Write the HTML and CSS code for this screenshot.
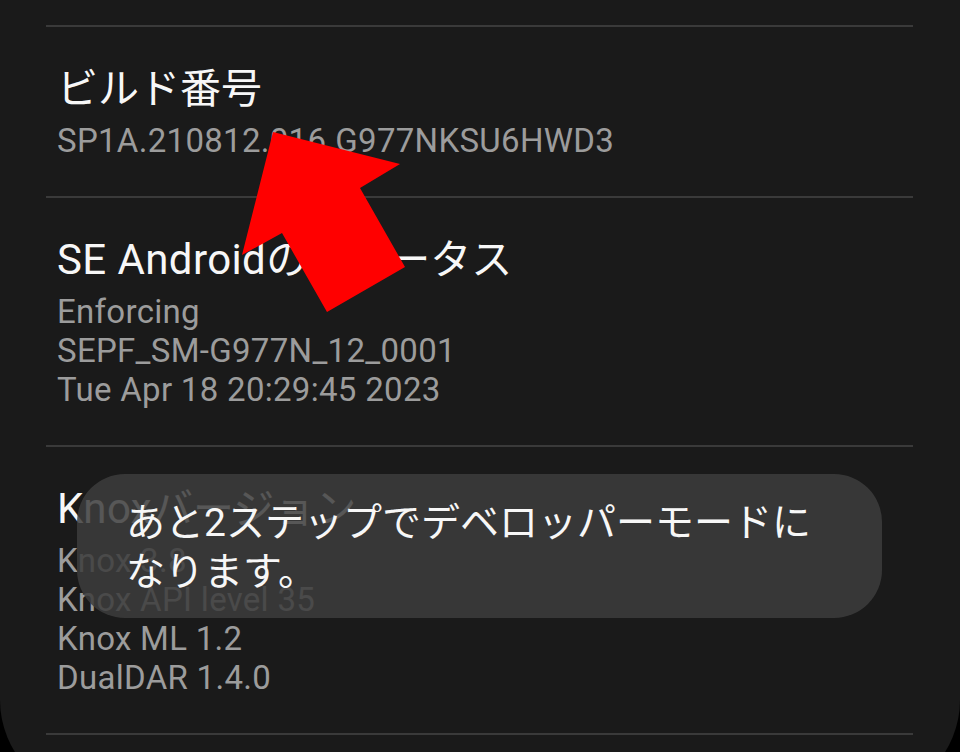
FILE: index.html
```html
<!DOCTYPE html>
<html lang="ja">
<head>
<meta charset="utf-8">
<title>ソフトウェア情報</title>
<link rel="stylesheet" href="styles.css">
</head>
<body>
<div class="screen">
  <div class="card">
    <div class="divider"></div>
    <div class="row">
      <div class="title">ビルド番号</div>
      <div class="sub">SP1A.210812.016.G977NKSU6HWD3</div>
    </div>
    <div class="divider"></div>
    <div class="row">
      <div class="title"><span class="latin">SE Android</span>のステータス</div>
      <div class="sub">Enforcing</div>
      <div class="sub">SEPF_SM-G977N_12_0001</div>
      <div class="sub">Tue Apr 18 20:29:45 2023</div>
    </div>
    <div class="divider"></div>
    <div class="row">
      <div class="title"><span class="latin">Knox</span>バージョン</div>
      <div class="sub">Knox 3.8</div>
      <div class="sub">Knox API level 35</div>
      <div class="sub">Knox ML 1.2</div>
      <div class="sub">DualDAR 1.4.0</div>
    </div>
    <div class="divider"></div>
  </div>

  <div class="toast">あと2ステップでデベロッパーモードに<br>なります。</div>

  <svg class="arrow" viewBox="0 0 960 752" width="960" height="752" aria-hidden="true">
    <polygon points="273,132 400,164 360,188 405,267 327,312 282,233 242,255" fill="#ff0000"/>
  </svg>
</div>
</body>
</html>
```

FILE: styles.css
```css
html, body {
  margin: 0;
  padding: 0;
  background: #000;
  overflow: hidden;
}

.screen {
  position: relative;
  width: 960px;
  height: 752px;
  overflow: hidden;
  font-family: "Roboto", "Noto Sans CJK JP", sans-serif;
}

.card {
  background: #1a1a1a;
  border-radius: 0 0 98px 98px;
  padding: 25px 0 63px;
}

.divider {
  height: 2px;
  background: #3a3a3a;
  margin: 0 47px 0 46px;
}

.row {
  padding: 37px 40px 36px 57px;
}

.title {
  font-size: 41px;
  line-height: 50px;
  color: #f7f7f7;
  margin-bottom: 7px;
  white-space: nowrap;
}

.title .latin {
  font-size: 42px;
  letter-spacing: 0.4px;
}

.sub {
  font-size: 33px;
  line-height: 39px;
  letter-spacing: 0.3px;
  color: #9c9c9c;
  white-space: nowrap;
}

.toast {
  position: absolute;
  left: 77px;
  top: 474px;
  width: 805px;
  box-sizing: border-box;
  padding: 25px 40px 21px 49px;
  border-radius: 48px;
  background: rgba(61, 61, 61, 0.86);
  color: #f7f7f7;
  font-size: 39px;
  line-height: 49px;
}

.arrow {
  position: absolute;
  left: 0;
  top: 0;
  pointer-events: none;
}
```
